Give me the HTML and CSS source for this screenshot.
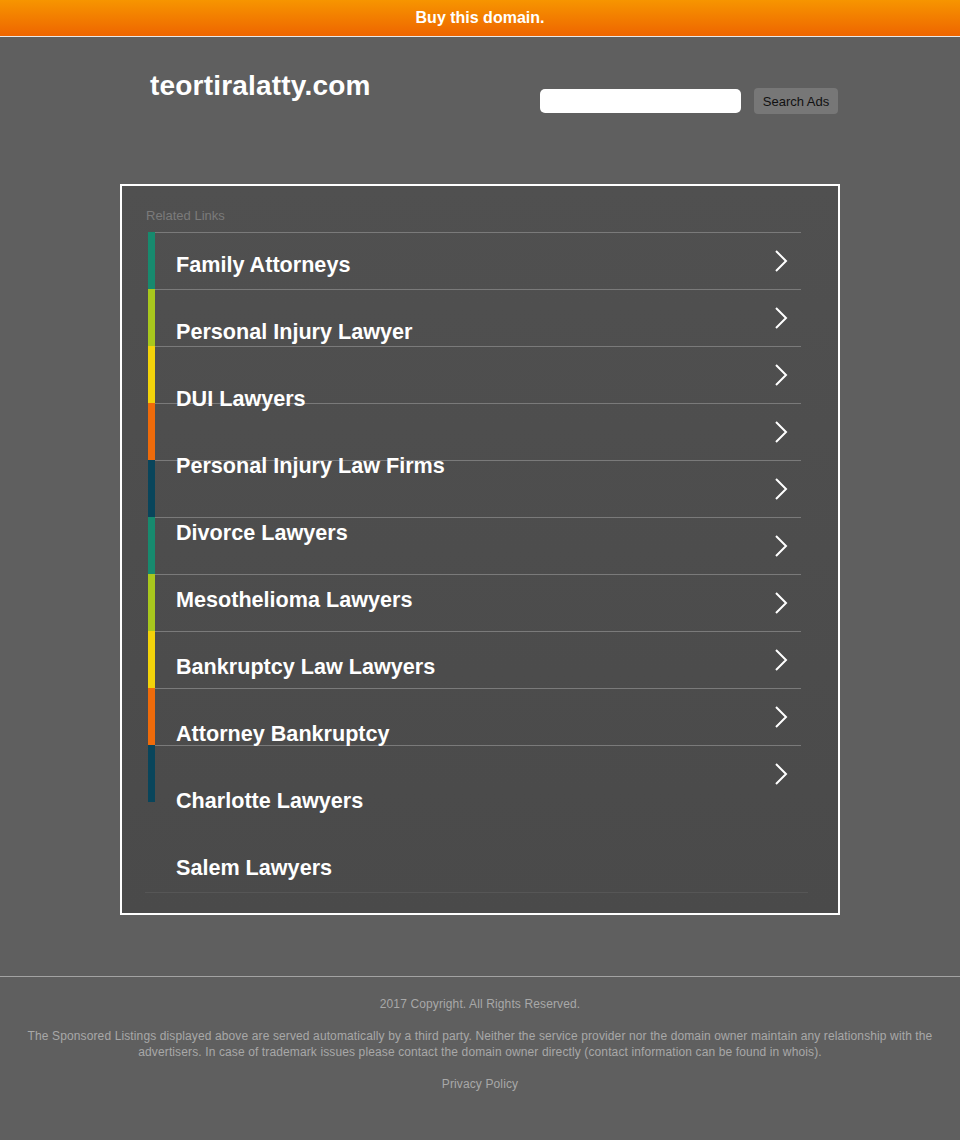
FILE: index.html
```html
<!DOCTYPE html>
<html lang="en">

<head>
    <meta charset="utf-8">
    <title>teortiralatty.com</title>

    <link rel="stylesheet" href="styles.css">
</head>

<body>
    <div class="topbar">
        <a href="#">Buy this domain.</a>
    </div>

    <header class="site-header">
        <h1 class="domain">teortiralatty.com</h1>
        <form class="search" action="">
            <input type="text" class="search-input">
            <button type="submit" class="search-btn">Search Ads</button>
        </form>
    </header>

    <main class="links-box">
        <p class="links-title">Related Links</p>

        <div class="links">
            <!-- striped rows with colour bar and arrow, drawn under the link list -->
            <div class="rows">
                <div class="row"><span class="bar teal"></span><span class="row-body"><svg class="arrow" viewBox="0 0 14 24"><polyline points="2,2 12,12 2,22" /></svg></span></div>
                <div class="row"><span class="bar lime"></span><span class="row-body"><svg class="arrow" viewBox="0 0 14 24"><polyline points="2,2 12,12 2,22" /></svg></span></div>
                <div class="row"><span class="bar yellow"></span><span class="row-body"><svg class="arrow" viewBox="0 0 14 24"><polyline points="2,2 12,12 2,22" /></svg></span></div>
                <div class="row"><span class="bar orange"></span><span class="row-body"><svg class="arrow" viewBox="0 0 14 24"><polyline points="2,2 12,12 2,22" /></svg></span></div>
                <div class="row"><span class="bar navy"></span><span class="row-body"><svg class="arrow" viewBox="0 0 14 24"><polyline points="2,2 12,12 2,22" /></svg></span></div>
                <div class="row"><span class="bar teal"></span><span class="row-body"><svg class="arrow" viewBox="0 0 14 24"><polyline points="2,2 12,12 2,22" /></svg></span></div>
                <div class="row"><span class="bar lime"></span><span class="row-body"><svg class="arrow" viewBox="0 0 14 24"><polyline points="2,2 12,12 2,22" /></svg></span></div>
                <div class="row"><span class="bar yellow"></span><span class="row-body"><svg class="arrow" viewBox="0 0 14 24"><polyline points="2,2 12,12 2,22" /></svg></span></div>
                <div class="row"><span class="bar orange"></span><span class="row-body"><svg class="arrow" viewBox="0 0 14 24"><polyline points="2,2 12,12 2,22" /></svg></span></div>
                <div class="row"><span class="bar navy"></span><span class="row-body"><svg class="arrow" viewBox="0 0 14 24"><polyline points="2,2 12,12 2,22" /></svg></span></div>
            </div>

            <ul class="link-list">
                <li><a href="#">Family Attorneys</a></li>
                <li><a href="#">Personal Injury Lawyer</a></li>
                <li><a href="#">DUI Lawyers</a></li>
                <li><a href="#">Personal Injury Law Firms</a></li>
                <li><a href="#">Divorce Lawyers</a></li>
                <li><a href="#">Mesothelioma Lawyers</a></li>
                <li><a href="#">Bankruptcy Law Lawyers</a></li>
                <li><a href="#">Attorney Bankruptcy</a></li>
                <li><a href="#">Charlotte Lawyers</a></li>
                <li><a href="#">Salem Lawyers</a></li>
            </ul>
        </div>
    </main>

    <footer class="site-footer">
        <p>2017 Copyright. All Rights Reserved.</p>
        <p>The Sponsored Listings displayed above are served automatically by a third party. Neither the service provider nor the domain owner maintain any relationship with the advertisers. In case of trademark issues please contact the domain owner directly (contact information can be found in whois).</p>
        <p><a href="#">Privacy Policy</a></p>
    </footer>
</body>

</html>
```

FILE: styles.css
```css
* {
    padding: 0;
    margin: 0;
    box-sizing: border-box;
    font-family: "Liberation Sans", Arial, Helvetica, sans-serif;
}

body {
    background-color: #5f5f5f;
    min-height: 1140px;
}

.topbar {
    height: 37px;
    background: linear-gradient(#f79500, #ee6500);
    border-bottom: 1px solid #e9e9e9;
    text-align: center;
}

.topbar a {
    display: inline-block;
    line-height: 35px;
    font-size: 16px;
    font-weight: bold;
    color: #fff;
    text-decoration: none;
}

.site-header {
    width: 720px;
    height: 147px;
    margin: 0 auto;
    padding: 0 2px 0 30px;
    display: flex;
    justify-content: space-between;
    align-items: flex-start;
}

.domain {
    margin-top: 33px;
    font-size: 28px;
    line-height: 32px;
    letter-spacing: 0.2px;
    color: #fff;
}

.search {
    margin-top: 51px;
    display: flex;
    align-items: center;
}

.search-input {
    width: 201px;
    height: 24px;
    border: none;
    border-radius: 5px;
    background-color: #fff;
}

.search-btn {
    margin-left: 13px;
    width: 84px;
    height: 26px;
    border: none;
    border-radius: 4px;
    background-color: #777;
    color: #111;
    font-size: 13px;
    cursor: pointer;
}

.links-box {
    width: 720px;
    height: 731px;
    margin: 0 auto;
    padding: 22px 30px 0 23px;
    border: 2px solid #fff;
    background: linear-gradient(#505050, #4a4a4a);
}

.links-title {
    font-size: 13px;
    line-height: 15px;
    margin: 0 0 9px 1px;
    color: #7b7b7b;
}

/* both layers share one grid cell */
.links {
    display: grid;
}

.rows,
.link-list {
    grid-area: 1 / 1;
}

.rows {
    margin-left: 3px;
    width: 653px;
}

.row {
    display: flex;
    height: 57px;
}

.bar {
    width: 7px;
}

.teal { background-color: #178a6e; }
.lime { background-color: #a8c71d; }
.yellow { background-color: #f3d30a; }
.orange { background-color: #ef6b0a; }
.navy { background-color: #09455b; }

.row-body {
    flex: 1;
    display: flex;
    align-items: center;
    justify-content: flex-end;
    padding-right: 13px;
    border-top: 1px solid #7a7a7a;
}

.arrow {
    width: 14px;
    height: 24px;
    fill: none;
    stroke: #fff;
    stroke-width: 2;
}

.link-list {
    list-style: none;
    display: flex;
    flex-direction: column;
    gap: 10px;
    border-bottom: 1px solid #565656;
    align-self: start;
}

.link-list li {
    height: 57px;
    padding: 8px 0 0 31px;
}

.link-list a {
    font-size: 21.6px;
    font-weight: bold;
    line-height: 49px;
    color: #fff;
    text-decoration: none;
}

.site-footer {
    margin-top: 61px;
    padding: 19px 20px 0;
    border-top: 1px solid #a3a3a3;
    text-align: center;
}

.site-footer p {
    font-size: 12px;
    line-height: 16px;
    letter-spacing: 0.12px;
    margin-bottom: 16px;
    color: #a8a8a8;
}

.site-footer a {
    color: #a8a8a8;
    text-decoration: none;
}
```
